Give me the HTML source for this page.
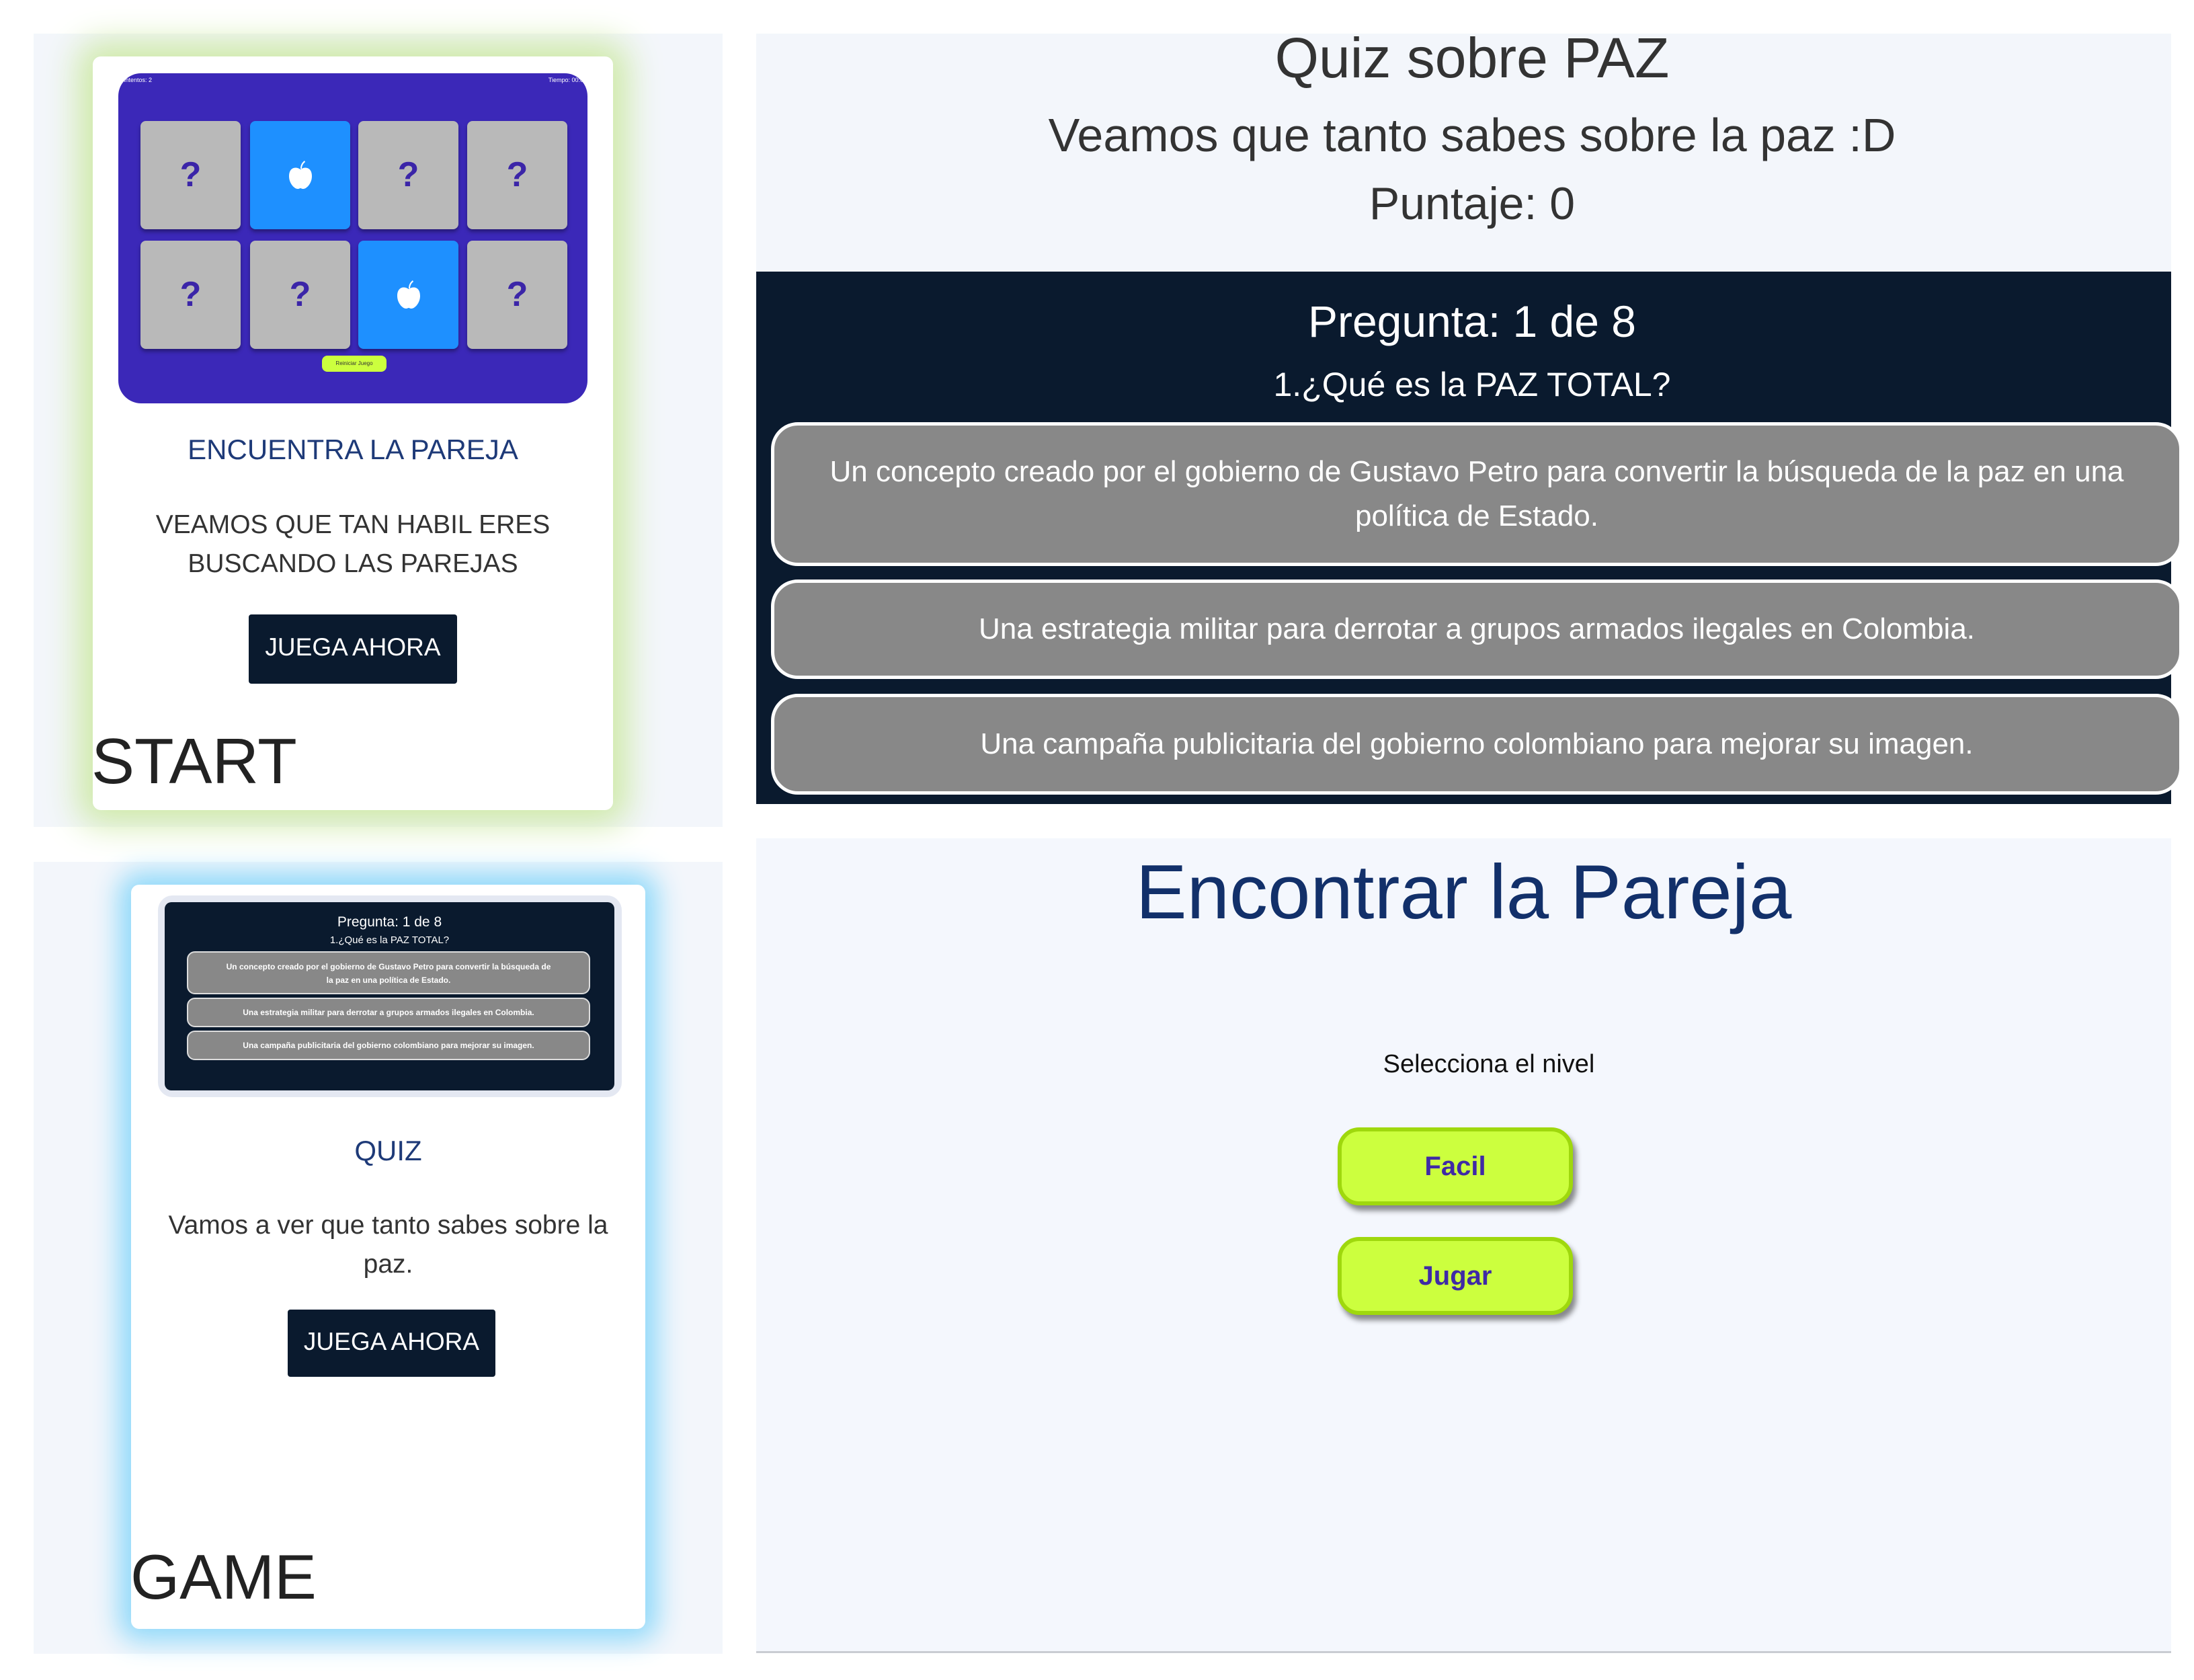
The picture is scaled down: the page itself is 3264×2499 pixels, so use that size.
<!DOCTYPE html>
<html><head><meta charset="utf-8"><style>
*{margin:0;padding:0;box-sizing:border-box}
body{width:3264px;height:2499px;background:#fff;position:relative;overflow:hidden;font-family:"Liberation Sans",Arial,sans-serif}
.abs{position:absolute}
.c{text-align:center}
.panel{background:#f3f6fb}
.card{background:#fff;border-radius:12px}
.mc{position:absolute;width:149px;height:161px;border-radius:8px;background:#b9b9b9;box-shadow:0 4px 6px rgba(0,0,0,.35);color:#3b25a8;font-weight:bold;font-size:52px;text-align:center;line-height:161px}
.mc.b{background:#1e90ff}
.mc svg{position:absolute;left:56px;top:58px}
.btn{background:#0a1a2e;color:#fff;border-radius:4px;font-size:37px;text-align:center}
.opt{position:absolute;left:1147px;width:2100px;background:#888;border:5px solid #fff;border-radius:40px;color:#fff;font-size:44px;text-align:center}
.yb{position:absolute;left:1990px;width:350px;background:#ccff3e;border:6px solid #9fd80d;border-radius:32px;box-shadow:5px 8px 8px rgba(0,0,0,.45);color:#3f2aa6;font-weight:bold;font-size:40px;text-align:center}
.to{position:absolute;left:33px;width:600px;background:#888;border:2px solid #ddd;border-radius:12px;color:#fff;font-size:12px;text-align:center;font-weight:bold}
</style></head><body>

<!-- top-left panel -->
<div class="abs panel" style="left:50px;top:50px;width:1025px;height:1180px"></div>
<div class="abs card" style="left:138px;top:84px;width:774px;height:1121px;box-shadow:0 0 50px 22px #cfeaa8"></div>
<div class="abs" style="left:176px;top:109px;width:698px;height:491px;background:#3b28b8;border-radius:34px">
 <div class="abs" style="left:8px;top:5px;color:#fff;font-size:9px">Intentos: 2</div>
 <div class="abs" style="right:6px;top:5px;color:#fff;font-size:9px">Tiempo: 00:0</div>
</div>
<div class="mc" style="left:209px;top:180px">?</div>
<div class="mc b" style="left:372px;top:180px"><svg width="38" height="44" viewBox="0 0 38 44"><path d="M19 14 C12 9 2 11 2 24 C2 35 10 43 15 43 C17 43 18 42 19 42 C20 42 21 43 23 43 C28 43 36 35 36 24 C36 11 26 9 19 14Z" fill="#fff"/><path d="M19 13 C19 8 21 4 25 1 L26 3 C23 5 21 9 21 13Z" fill="#fff"/></svg></div>
<div class="mc" style="left:533px;top:180px">?</div>
<div class="mc" style="left:695px;top:180px">?</div>
<div class="mc" style="left:209px;top:358px">?</div>
<div class="mc" style="left:372px;top:358px">?</div>
<div class="mc b" style="left:533px;top:358px"><svg width="38" height="44" viewBox="0 0 38 44"><path d="M19 14 C12 9 2 11 2 24 C2 35 10 43 15 43 C17 43 18 42 19 42 C20 42 21 43 23 43 C28 43 36 35 36 24 C36 11 26 9 19 14Z" fill="#fff"/><path d="M19 13 C19 8 21 4 25 1 L26 3 C23 5 21 9 21 13Z" fill="#fff"/></svg></div>
<div class="mc" style="left:695px;top:358px">?</div>
<div class="abs" style="left:479px;top:529px;width:96px;height:24px;background:#ccff3e;border-radius:8px;font-size:8px;text-align:center;line-height:24px;color:#333">Reiniciar Juego</div>
<div class="abs c" style="left:138px;top:645px;width:774px;font-size:42px;color:#1e3a78">ENCUENTRA LA PAREJA</div>
<div class="abs c" style="left:138px;top:752px;width:774px;font-size:39px;line-height:58px;color:#333">VEAMOS QUE TAN HABIL ERES<br>BUSCANDO LAS PAREJAS</div>
<div class="abs btn" style="left:370px;top:914px;width:310px;height:103px;line-height:98px">JUEGA AHORA</div>
<div class="abs" style="left:136px;top:1078px;font-size:96px;color:#222">START</div>

<!-- top-right panel -->
<div class="abs" style="left:1125px;top:50px;width:2105px;height:354px;background:#f3f6fb"></div>
<div class="abs c" style="left:1125px;top:38px;width:2130px;font-size:84px;color:#333">Quiz sobre PAZ</div>
<div class="abs c" style="left:1125px;top:161px;width:2130px;font-size:70px;color:#333">Veamos que tanto sabes sobre la paz :D</div>
<div class="abs c" style="left:1125px;top:264px;width:2130px;font-size:68px;color:#333">Puntaje: 0</div>
<div class="abs" style="left:1125px;top:404px;width:2105px;height:792px;background:#0a1a2e"></div>
<div class="abs c" style="left:1125px;top:440px;width:2130px;font-size:66px;color:#fff">Pregunta: 1 de 8</div>
<div class="abs c" style="left:1125px;top:543px;width:2130px;font-size:50px;color:#fff">1.¿Qué es la PAZ TOTAL?</div>
<div class="opt" style="top:628px;height:214px;padding-top:36px;line-height:66px">Un concepto creado por el gobierno de Gustavo Petro para convertir la búsqueda de la paz en una<br>política de Estado.</div>
<div class="opt" style="top:862px;height:148px;line-height:138px">Una estrategia militar para derrotar a grupos armados ilegales en Colombia.</div>
<div class="opt" style="top:1032px;height:150px;line-height:140px">Una campaña publicitaria del gobierno colombiano para mejorar su imagen.</div>

<!-- bottom-left panel -->
<div class="abs panel" style="left:50px;top:1282px;width:1025px;height:1178px"></div>
<div class="abs card" style="left:195px;top:1316px;width:765px;height:1107px;box-shadow:0 0 40px 18px #8fd9fa"></div>
<div class="abs" style="left:235px;top:1332px;width:690px;height:300px;border-radius:22px;background:#e4e8f2"></div>
<div class="abs" style="left:245px;top:1342px;width:669px;height:280px;border-radius:10px;background:#0a1a2e">
 <div class="abs c" style="left:0;top:18px;width:669px;color:#fff;font-size:21px">Pregunta: 1 de 8</div>
 <div class="abs c" style="left:0;top:48px;width:669px;color:#fff;font-size:15px">1.¿Qué es la PAZ TOTAL?</div>
 <div class="to" style="top:73px;height:64px;line-height:20px;padding-top:11px">Un concepto creado por el gobierno de Gustavo Petro para convertir la búsqueda de<br>la paz en una política de Estado.</div>
 <div class="to" style="top:142px;height:44px;line-height:40px">Una estrategia militar para derrotar a grupos armados ilegales en Colombia.</div>
 <div class="to" style="top:191px;height:44px;line-height:40px">Una campaña publicitaria del gobierno colombiano para mejorar su imagen.</div>
</div>
<div class="abs c" style="left:195px;top:1688px;width:765px;font-size:42px;color:#1e3a78">QUIZ</div>
<div class="abs c" style="left:230px;top:1794px;width:695px;font-size:39px;line-height:58px;color:#333">Vamos a ver que tanto sabes sobre la<br>paz.</div>
<div class="abs btn" style="left:428px;top:1948px;width:309px;height:100px;line-height:96px">JUEGA AHORA</div>
<div class="abs" style="left:194px;top:2292px;font-size:94px;color:#222">GAME</div>

<!-- bottom-right panel -->
<div class="abs" style="left:1125px;top:1247px;width:2105px;height:1212px;background:#f4f7fd;border-bottom:3px solid #c9ccd2"></div>
<div class="abs c" style="left:1125px;top:1262px;width:2105px;font-size:114px;color:#12306a">Encontrar la Pareja</div>
<div class="abs c" style="left:1950px;top:1562px;width:530px;font-size:38px;color:#111">Selecciona el nivel</div>
<div class="yb" style="top:1677px;height:116px;line-height:104px">Facil</div>
<div class="yb" style="top:1840px;height:116px;line-height:104px">Jugar</div>
</body></html>
